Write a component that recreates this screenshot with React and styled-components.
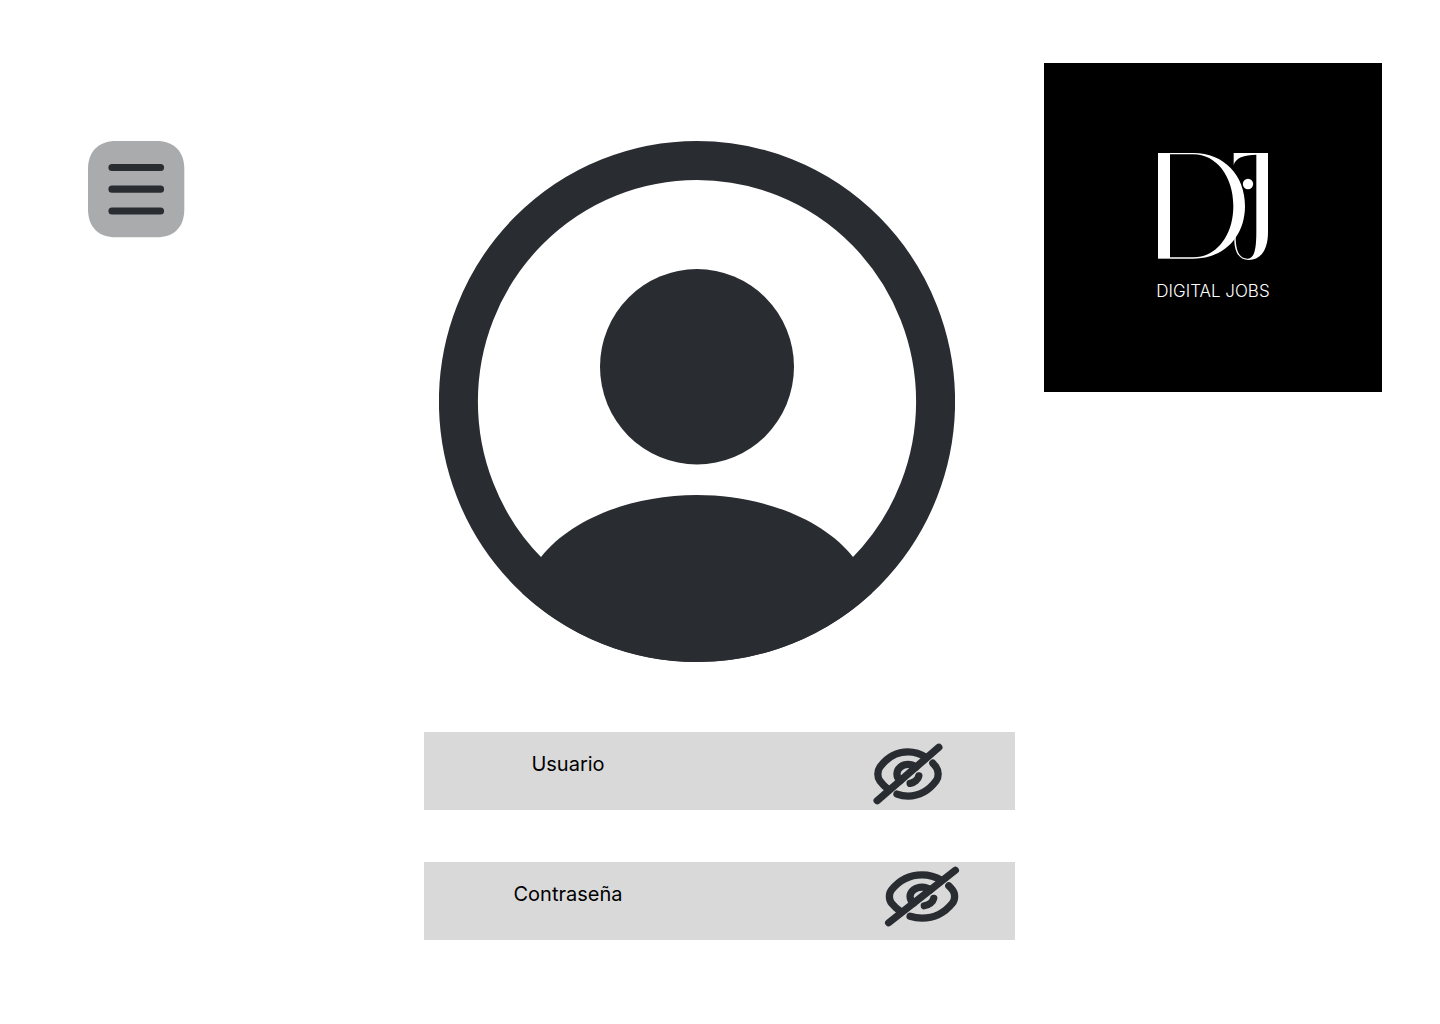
import React from "react";
import styled, { createGlobalStyle } from "styled-components";

const ink = "#292D32";

const GlobalStyle = createGlobalStyle`
  *, *::before, *::after { box-sizing: border-box; }
  body {
    margin: 0;
    background: #ffffff;
    color: #000000;
    font-family: Inter, "Liberation Sans", sans-serif;
  }
`;

const Page = styled.div`
  display: grid;
  grid-template-columns: 1fr minmax(0, 592px) 1fr;
  align-items: start;
  min-height: 100vh;
`;

const Nav = styled.nav`
  padding: 141px 0 0 88px;
`;

const MenuButton = styled.button`
  display: block;
  padding: 0;
  border: 0;
  background: none;
  cursor: pointer;

  svg { display: block; overflow: visible; }
`;

const Main = styled.main`
  padding: 141px 0 80px;
`;

const Avatar = styled.svg`
  display: block;
  width: 516px;
  max-width: 100%;
  margin-left: 15px;
`;

const Form = styled.form`
  display: flex;
  flex-direction: column;
  gap: 52px;
  max-width: 591px;
  margin-top: 70px;
`;

const Field = styled.div`
  display: flex;
  align-items: flex-start;
  height: 78px;
  padding-right: ${(p) => p.$inset}px;
  background: #d9d9d9;
`;

const Label = styled.label`
  width: 288px;
  padding-top: 20px;
  font-size: 20px;
  line-height: 24px;
  text-align: center;
`;

const TextBox = styled.input`
  flex: 1;
  min-width: 0;
  align-self: stretch;
  padding: 0;
  border: 0;
  outline: 0;
  background: transparent;
  font: inherit;
  font-size: 20px;
`;

const EyeButton = styled.button`
  padding: ${(p) => p.$top}px 0 0;
  border: 0;
  background: none;
  cursor: pointer;

  svg { display: block; overflow: visible; }
`;

const Aside = styled.aside`
  display: flex;
  justify-content: flex-end;
  padding: 63px 58px 0 0;
`;

const Brand = styled.div`
  display: flex;
  flex-direction: column;
  align-items: center;
  gap: 19px;
  width: 338px;
  height: 329px;
  padding-top: 90px;
  background: #000000;
  color: #ffffff;
`;

const BrandName = styled.span`
  font-weight: 300;
  font-size: 17px;
  line-height: 24px;
  white-space: nowrap;
`;

function MenuIcon() {
  return (
    <svg width="96" height="96" viewBox="0 0 96 96" aria-hidden="true">
      <path
        d="M28 0H68.500C86 0 96.300 10.500 96.300 28V68.200C96.300 86 86 96.300 68.500 96.300H28C10.500 96.300 0 86 0 68.200V28C0 10.500 10.500 0 28 0Z"
        fill="#A9ABAD"
      />
      <path d="M24 26.500H72.500M24 48.200H72.500M24 70H72.500" stroke={ink} strokeWidth="7.200" strokeLinecap="round" />
    </svg>
  );
}

function EyeSlashIcon({ width, height }) {
  return (
    <svg width={width} height={height} viewBox="0 0 24 24" preserveAspectRatio="none" fill="none" aria-hidden="true">
      <g stroke={ink} strokeWidth="7.300" strokeLinecap="round" strokeLinejoin="round">
        <path vectorEffect="non-scaling-stroke" d="M14.530 9.470L9.470 14.530C8.820 13.880 8.420 12.990 8.420 12C8.420 10.020 10.020 8.420 12 8.420C12.990 8.420 13.880 8.820 14.530 9.470Z" />
        <path vectorEffect="non-scaling-stroke" d="M17.820 5.770C16.070 4.450 14.070 3.730 12 3.730C8.470 3.730 5.180 5.810 2.890 9.410C1.990 10.820 1.990 13.190 2.890 14.600C3.680 15.840 4.600 16.910 5.600 17.770" />
        <path vectorEffect="non-scaling-stroke" d="M8.420 19.530C9.560 20.010 10.770 20.270 12 20.270C15.530 20.270 18.820 18.190 21.110 14.590C22.010 13.180 22.010 10.810 21.110 9.400C20.780 8.880 20.420 8.390 20.050 7.930" />
        <path vectorEffect="non-scaling-stroke" d="M15.510 12.700C15.250 14.110 14.100 15.260 12.690 15.520" />
        <path vectorEffect="non-scaling-stroke" d="M9.470 14.530L2 22M22 2L14.530 9.470" />
      </g>
    </svg>
  );
}

function BrandMark() {
  return (
    <svg width="110" height="107" viewBox="84 69 330 321" fill="#ffffff" aria-hidden="true">
      <rect x="84" y="69" width="36" height="317" />
      <path d="M120 69H190C282 69 345 136 345 228C345 320 282 386 190 386H120V382H190C258 382 310 318 310 228C310 138 258 73 190 73H120Z" />
      <path d="M311 69H414V306C414 360 392 390 356 390C326 390 311 364 313 318L317 314C316 362 328 386 352 386C372 386 379 362 379 306V74C342 74 316 84 311 106Z" />
      <circle cx="354" cy="162" r="15.500" />
    </svg>
  );
}

function CredentialField({ id, label, type, inset, iconTop, iconWidth, iconHeight }) {
  return (
    <Field $inset={inset}>
      <Label htmlFor={id}>{label}</Label>
      <TextBox id={id} name={id} type={type} />
      <EyeButton type="button" aria-label={`Mostrar ${label}`} $top={iconTop}>
        <EyeSlashIcon width={iconWidth} height={iconHeight} />
      </EyeButton>
    </Field>
  );
}

export default function App() {
  return (
    <>
      <GlobalStyle />
      <Page>
        <Nav>
          <MenuButton type="button" aria-label="Menú">
            <MenuIcon />
          </MenuButton>
        </Nav>
        <Main>
          <Avatar viewBox="439 141 516 521" fill={ink} aria-hidden="true">
            <ellipse cx="697" cy="401.500" rx="238.600" ry="241" fill="none" stroke={ink} strokeWidth="39" />
            <ellipse cx="697" cy="366.800" rx="97" ry="97.700" />
            <path d="M541 557C571 519 632 495 697 495C762 495 823 519 853 557L872 593C824 637 762 662 697 662C632 662 570 637 522 593Z" />
          </Avatar>
          <Form onSubmit={(e) => e.preventDefault()}>
            <CredentialField id="usuario" label="Usuario" type="text" inset={70} iconTop={10} iconWidth={74} iconHeight={64} />
            <CredentialField id="contrasena" label="Contraseña" type="password" inset={53} iconTop={3} iconWidth={80} iconHeight={63} />
          </Form>
        </Main>
        <Aside>
          <Brand>
            <BrandMark />
            <BrandName>DIGITAL JOBS</BrandName>
          </Brand>
        </Aside>
      </Page>
    </>
  );
}
